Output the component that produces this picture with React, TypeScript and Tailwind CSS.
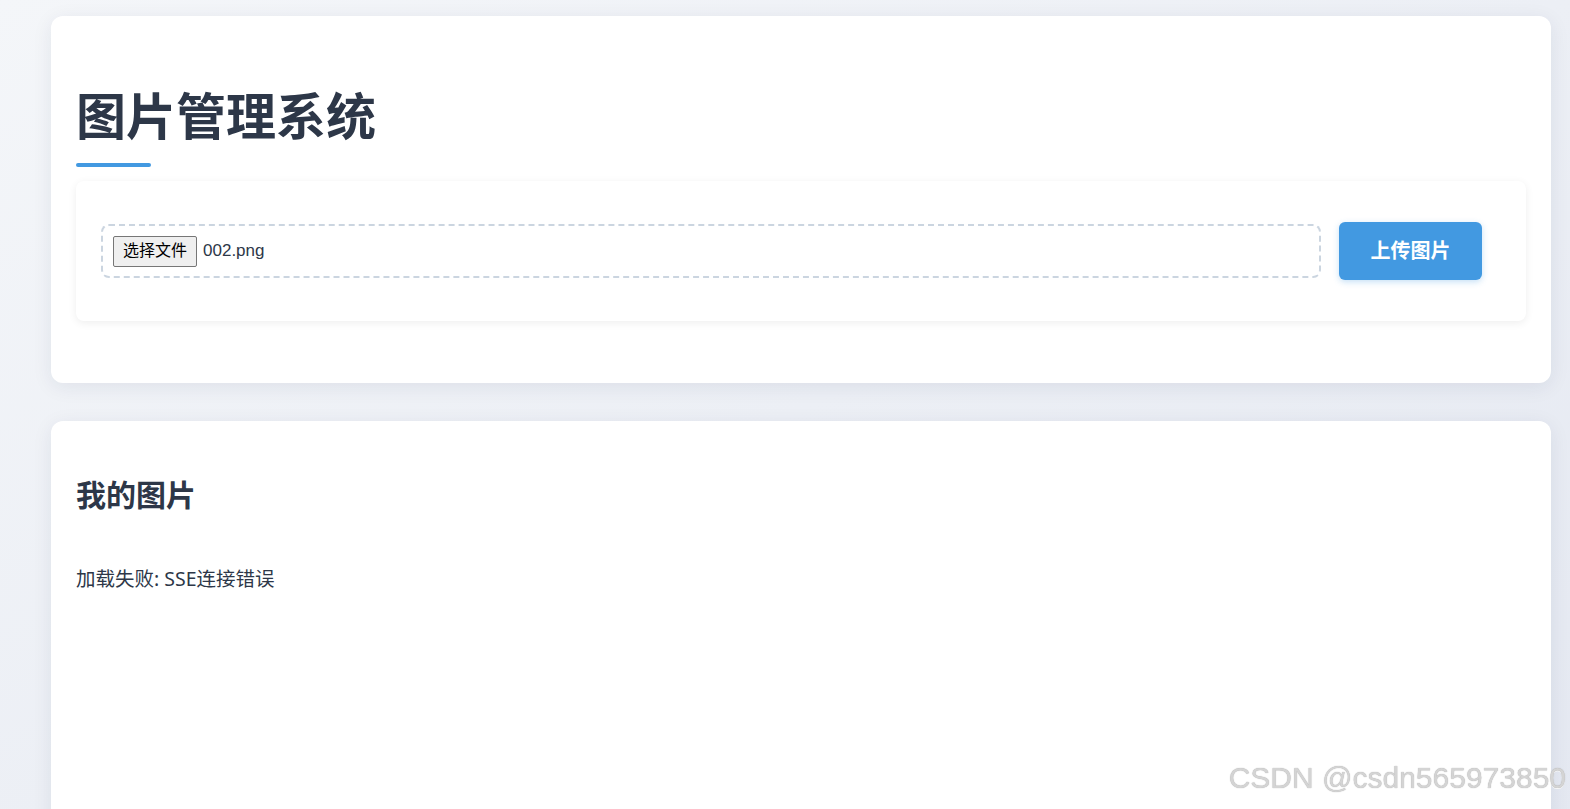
export default function App() {
  return (
    <div
      className="min-h-screen overflow-hidden bg-gradient-to-br from-[#f4f6f9] to-[#e4e8f1] pl-[51px] pr-[19px] pt-[16px] text-[#2d3748]"
      style={{ fontFamily: '"Noto Sans", "Noto Sans CJK SC", sans-serif' }}
    >
      <div className="flex flex-col gap-[38px]">
        <section className="rounded-[12px] bg-white px-[25px] pb-[62px] pt-[70px] shadow-[0_4px_20px_rgba(30,41,80,0.08)]">
          <h1 className="text-[50px] font-bold leading-[60px] text-[#2d3748]">图片管理系统</h1>
          <div className="mt-[17px] h-[4px] w-[75px] rounded-full bg-[#4299e1]" />

          <div className="mt-[14px] flex items-center rounded-[8px] bg-white py-[41px] pl-[25px] pr-[44px] shadow-[0_2px_8px_rgba(0,0,0,0.07)]">
            <div className="flex h-[54px] flex-1 items-center rounded-[8px] border-2 border-dashed border-[#cbd5e0] pl-[10px]">
              <span
                className="flex h-[31px] items-center rounded-[2px] border border-[#767676] bg-[#efefef] px-[9px] text-[16px] text-black"
                style={{ fontFamily: '"Liberation Sans", "Noto Sans CJK SC", sans-serif' }}
              >
                选择文件
              </span>
              <span
                className="ml-[6px] text-[17px] text-[#2d3748]"
                style={{ fontFamily: '"Liberation Sans", "Noto Sans CJK SC", sans-serif' }}
              >
                002.png
              </span>
            </div>
            <button className="ml-[18px] h-[58px] w-[143px] rounded-[6px] bg-[#4299e1] text-[20px] font-semibold text-white shadow-[0_2px_6px_rgba(66,153,225,0.3)]">
              上传图片
            </button>
          </div>
        </section>

        <section className="h-[420px] rounded-[12px] bg-white px-[25px] pt-[56px] shadow-[0_4px_20px_rgba(30,41,80,0.08)]">
          <h2 className="text-[30px] font-bold leading-[36px] text-[#2d3748]">我的图片</h2>
          <p className="mt-[52px] text-[19.5px] leading-[28px] text-[#2d3748]">加载失败: SSE连接错误</p>
        </section>
      </div>

      <div
        className="fixed bottom-[9px] right-[4px] text-[30px] text-[#d4d4d4] [text-shadow:0_0_1px_#9e9e9e,0_1px_0_#ffffff]"
        style={{ fontFamily: '"Liberation Sans", Arial, sans-serif' }}
      >
        CSDN @csdn565973850
      </div>
    </div>
  )
}
